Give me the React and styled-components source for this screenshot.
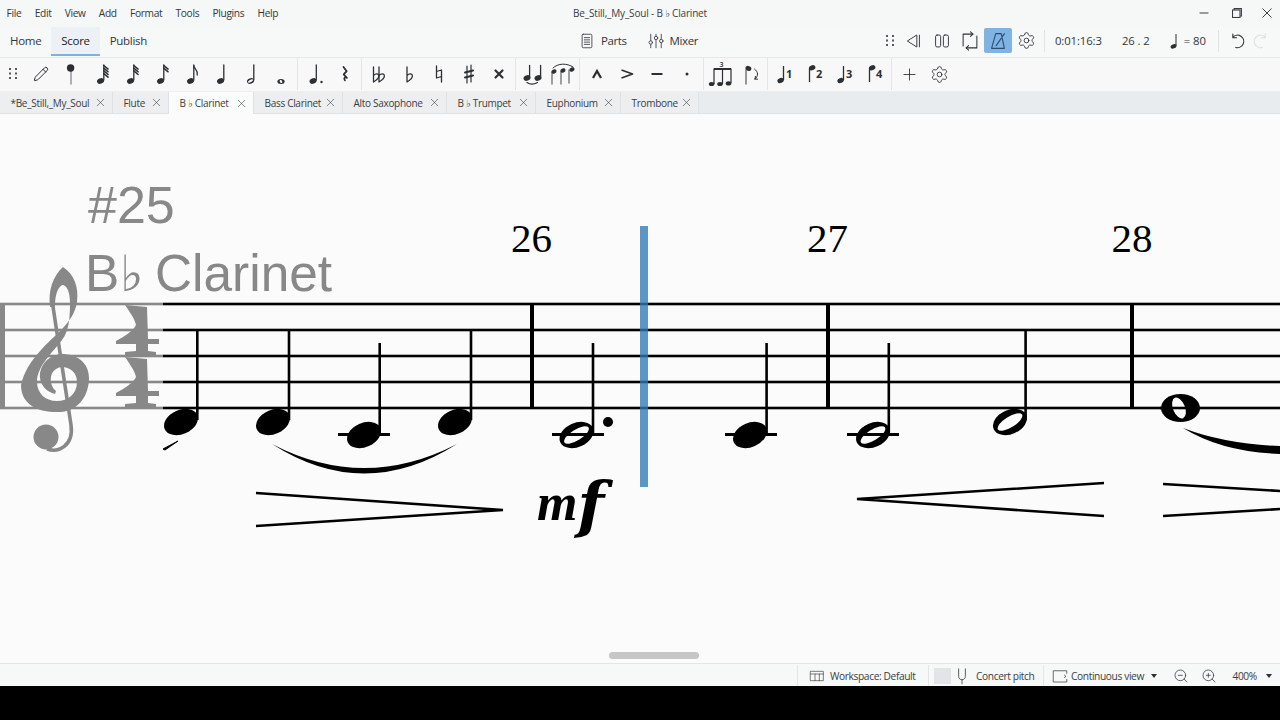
import React from "react";
import styled, { createGlobalStyle } from "styled-components";
import { Plus, Settings, ZoomIn, ZoomOut, X, Pencil } from "lucide-react";

const INK = "#2c3034";
const GREY = "#888888";
const PAPER = "#fbfbfb";
const UI = `"Open Sans", "Noto Sans", "DejaVu Sans", sans-serif`;

const Global = createGlobalStyle`
  html, body { margin: 0; padding: 0; background: #000; }
  * { box-sizing: border-box; }
`;

const Page = styled.div`
  width: 1280px; height: 720px; background: #000; overflow: hidden;
  font-family: ${UI}; color: ${INK};
`;
const Frame = styled.div`
  height: 686px; display: flex; flex-direction: column; background: #f7f8f8;
`;
const TitleBar = styled.div`
  height: 27px; padding-bottom: 1px; display: grid; grid-template-columns: 1fr auto 1fr; align-items: center; background: #f6f7f7;
`;
const Menu = styled.nav`display: flex;`;
const MenuItem = styled.span`
  padding: 0 6.6px; font-size: 10.2px; letter-spacing: -0.32px; color: #33373b;
`;
const Title = styled.div`font-size: 10px; letter-spacing: -0.18px; color: #3a3e42;`;
const WindowControls = styled.div`display: flex; justify-content: flex-end;`;
const WindowButton = styled.span`
  width: ${p => p.$w}px; height: 26px; display: flex; align-items: center; justify-content: center; color: #3a3e42;
`;
const ModeBar = styled.div`
  height: 31px; padding-bottom: 1px; display: grid; grid-template-columns: 1fr auto 1fr; align-items: stretch;
  background: #f7f8f8; border-bottom: 1px solid #e6e8e9;
`;
const ModeTabs = styled.div`display: flex;`;
const ModeTab = styled.div`
  padding: 0 10px; font-size: 11.5px; letter-spacing: -0.3px; display: flex; align-items: center;
  color: ${p => (p.$active ? "#1f2225" : "#33373b")};
  background: ${p => (p.$active ? "#ebf1f5" : "transparent")};
  border-bottom: 2px solid ${p => (p.$active ? "#7fb2d8" : "transparent")};
`;
const CenterTools = styled.div`display: flex; align-items: center; gap: 20px; padding: 0 4px 2px 0;`;
const CenterTool = styled.div`display: flex; align-items: center; gap: 5px; font-size: 11.5px; letter-spacing: -0.4px; color: #33373b;`;
const Transport = styled.div`display: flex; align-items: center; justify-content: flex-end; padding: 0 7px 2px 0;`;
const TransportButton = styled.span`
  width: ${p => p.$w || 28}px; height: 25px; border-radius: 2px; display: flex; align-items: center; justify-content: center;
  background: ${p => (p.$active ? "#7fb3e4" : "transparent")};
  opacity: ${p => (p.$faint ? 0.12 : 1)};
`;
const VRule = styled.span`width: 1px; height: 22px; background: #e0e2e4; margin: 0 ${p => p.$r}px 0 ${p => p.$l}px;`;
const Readout = styled.span`
  width: ${p => p.$w}px; flex: none; font-size: 11.3px; letter-spacing: -0.1px; color: #33373b; white-space: pre; display: flex; align-items: center;
`;
const Toolbar = styled.div`
  height: 33px; padding-bottom: 1px; display: flex; align-items: stretch; background: #f8f8f8;
`;
const Grip = styled.span`width: 25px; display: flex; align-items: center; justify-content: center;`;
const ToolGroup = styled.div`
  display: flex; padding: 0 1px 0 ${p => (p.$first ? 1 : 2)}px;
  border-right: ${p => (p.$last ? "none" : "1px solid #e3e5e7")};
`;
const ToolButton = styled.span`
  width: 30px; display: flex; align-items: center; justify-content: center; color: ${INK};
`;
const TabBar = styled.div`
  height: 23px; display: flex; background: #e9ecee; border-bottom: 1px solid #dfe2e4; border-top: 1px solid #eceeef;
`;
const Tab = styled.div`
  width: ${p => p.$w}px; display: flex; align-items: center; justify-content: space-between; padding: 0 5px 0 10.5px;
  font-size: 10px; letter-spacing: -0.3px; color: #3a3e42; white-space: pre;
  background: ${p => (p.$active ? "#fafbfb" : "#eceef0")};
  border-right: 1px solid #dfe2e4;
  margin-bottom: ${p => (p.$active ? "-1px" : "0")};
`;
const ScoreArea = styled.main`
  position: relative; flex: 1; background: ${PAPER}; overflow: hidden;
`;
const ScoreSheet = styled.svg`display: block;`;
const TitleText = styled.text`
  font-family: "Liberation Sans", sans-serif; fill: ${GREY}; font-size: ${p => p.$size}px;
`;
const FlatGlyph = styled.tspan`font-family: "DejaVu Sans", sans-serif; font-weight: 200; font-size: 50px;`;
const MeasureNo = styled.text`
  font-family: "Liberation Serif", serif; fill: #000; font-size: 41px; text-anchor: middle;
`;
const Dynamic = styled.text`
  font-weight: 700; font-style: italic; fill: #000;
`;
const DynamicM = styled.tspan`font-family: "Liberation Serif", serif; font-size: 52px;`;
const DynamicF = styled.tspan`font-family: "DejaVu Serif", serif; font-size: 62px;`;
const ScrollThumb = styled.div`
  position: absolute; left: 609px; top: 538px; width: 90px; height: 7px; border-radius: 4px; background: #c6c6c6;
`;
const StatusBar = styled.footer`
  height: 23px; padding-top: 1px; display: flex; justify-content: flex-end; align-items: stretch; background: #f7f8f8; border-top: 1px solid #e3e5e7;
`;
const StatusSection = styled.div`
  display: flex; align-items: center; width: ${p => p.$w}px; padding-left: ${p => p.$pl || 0}px; gap: ${p => p.$gap || 0}px;
  border-left: 1px solid #e3e5e7; white-space: nowrap;
  font-size: 10.2px; letter-spacing: -0.38px; color: #3a3e42;
`;
const PitchSwatch = styled.span`width: 17px; height: 16px; background: #e3e4e7;`;
const Caret = styled.span`
  flex: none; width: 0; height: 0; border-left: 3px solid transparent; border-right: 3px solid transparent; border-top: 4px solid #2c3034;
`;
const Spacer = styled.span`width: ${p => p.$w}px; flex: none;`;

/* ---- icons ---- */
const Ico = ({ s = 24, w = 1.3, children, c = "currentColor" }) => (
  <svg width={s} height={s} viewBox="0 0 24 24" fill="none" stroke={c} strokeWidth={w} strokeLinecap="round" strokeLinejoin="round">{children}</svg>
);
const Head = ({ x = 12, y = 19, open, dark = INK }) => (
  <g>
    <ellipse cx={x} cy={y} rx="3.6" ry="2.7" transform={`rotate(-22 ${x} ${y})`} fill={dark} stroke="none" />
    {open && <ellipse cx={x} cy={y} rx="2.8" ry="1.2" transform={`rotate(-30 ${x} ${y})`} fill="#f8f8f8" stroke="none" />}
  </g>
);
const Note = ({ flags = 0, open }) => (
  <Ico>
    <Head x={11.5} open={open} />
    <path d="M14.8 18V3" />
    {Array.from({ length: flags }).map((_, i) => (
      flags === 1
        ? <path key={i} d="M14.8 4c.6 3 4.6 4.4 3.4 9" />
        : <path key={i} d={`M14.8 ${3.5 + i * 2.7}l4.3 3.6`} strokeWidth="1.5" />
    ))}
  </Ico>
);
const Dots = () => (
  <svg width="10" height="14" viewBox="0 0 10 14" fill="#555a5f">
    {[1, 5.5, 10].map(y => [0, 6].map(x => <rect key={`${x}${y}`} x={x + 1} y={y} width="2" height="2" />))}
  </svg>
);
const Pin = () => (
  <Ico><path d="M12 9v13" stroke="#9a9da0" strokeWidth="1.6" /><circle cx="11.6" cy="6" r="3.7" fill={INK} stroke="none" /></Ico>
);
const Whole = () => (
  <Ico><ellipse cx="12" cy="19.5" rx="3.6" ry="2.5" fill={INK} stroke="none" /><ellipse cx="12" cy="19.5" rx="1.2" ry="1.6" fill="#f8f8f8" stroke="none" transform="rotate(-30 12 19.5)" /></Ico>
);
const Dotted = () => (
  <Ico><Head x={10} /><path d="M13.3 18V3" /><circle cx="18.5" cy="20" r="1.2" fill={INK} stroke="none" /></Ico>
);
const Rest = () => (
  <Ico w={1.8}><path d="M10.5 5l3.2 4.2-3 3.2 3.2 3.4c-2-.8-3.6 0-2 2.6" /></Ico>
);
const FlatShape = ({ x = 0 }) => (
  <path d={`M${10 + x} 5v15c3-1.8 5.4-3.6 5.4-6 0-2.4-3-2.8-5.4-.6`} />
);
const Flat = () => <Ico><FlatShape /></Ico>;
const DoubleFlat = () => <Ico><FlatShape x={-3.5} /><FlatShape x={2} /></Ico>;
const Natural = () => <Ico><path d="M9.5 4v12l5-1.5M14.5 20V8l-5 1.5" /></Ico>;
const Sharp = () => <Ico w={1.2}><path d="M10 4v17M14 3v17" /><path d="M8 10.5l8-2M8 15.5l8-2" strokeWidth="2" /></Ico>;
const DoubleSharp = () => <Ico w={2.2}><path d="M8.5 8.5l7 7M15.5 8.5l-7 7" /></Ico>;
const Tie = () => (
  <Ico>
    <Head x={6} y={16} /><path d="M8.6 15V3.5" />
    <Head x={17} y={16} /><path d="M19.6 15V3.5" />
    <path d="M6 20.5c3 2 7 2 10.5 0" />
  </Ico>
);
const Slur = () => (
  <svg width="30" height="24" viewBox="0 0 30 24" fill="none" stroke="#6a6d70" strokeWidth="1.3" strokeLinecap="round">
    <path d="M4 22V10M13 22V9M21 21V8" />
    <ellipse cx="6" cy="9.5" rx="2.6" ry="2" fill={INK} stroke="none" transform="rotate(-20 6 9.5)" />
    <ellipse cx="15" cy="8.5" rx="2.6" ry="2" fill={INK} stroke="none" transform="rotate(-20 15 8.5)" />
    <ellipse cx="24" cy="7.5" rx="2.6" ry="2" fill={INK} stroke="none" transform="rotate(-20 24 7.5)" />
    <path d="M5 6c5-5 14-5 20-1" stroke={INK} strokeWidth="1" />
  </svg>
);
const Marcato = () => <Ico w={2.3}><path d="M8 16l4-7 4 7" strokeLinecap="butt" strokeLinejoin="miter" /></Ico>;
const Accent = () => <Ico w={1.8}><path d="M6.5 8l11 4-11 4" strokeLinecap="butt" /></Ico>;
const Tenuto = () => <Ico w={2}><path d="M6.5 12h11" strokeLinecap="butt" /></Ico>;
const Staccato = () => <Ico><circle cx="12" cy="12" r="1.5" fill={INK} stroke="none" /></Ico>;
const TupletDigit = styled.text`font-family: "Open Sans", sans-serif; font-size: 7px; font-weight: 600; fill: ${INK}; stroke: none;`;
const Tuplet = () => (
  <svg width="28" height="28" viewBox="-1 0 28 28" fill="none" stroke={INK} strokeWidth="1.2">
    <TupletDigit x="11.6" y="6.5">3</TupletDigit>
    <path d="M6 24V9h17v14M14.5 24V9" />
    <path d="M6 9h17" strokeWidth="2" />
    <ellipse cx="3.6" cy="24" rx="2.8" ry="2.1" fill={INK} stroke="none" />
    <ellipse cx="12" cy="24" rx="2.8" ry="2.1" fill={INK} stroke="none" />
    <ellipse cx="20.5" cy="23.4" rx="2.8" ry="2.1" fill={INK} stroke="none" />
  </svg>
);
const Flip = () => (
  <Ico>
    <path d="M7 8v14" stroke="#5d6064" />
    <ellipse cx="9.4" cy="6.4" rx="3" ry="2.4" fill={INK} stroke="none" transform="rotate(20 9.4 6.4)" />
    <path d="M15.5 7c4 3 4 7 .5 10M16 17l2.6.2M16 17l.4-2.6" strokeWidth="1" />
  </Ico>
);
const VoiceDigit = styled.text`font-family: "Open Sans", sans-serif; font-size: 11px; font-weight: 700; fill: ${INK}; stroke: none;`;
const Voice = ({ n }) => {
  const up = n % 2 === 1;
  return (
    <svg width="24" height="24" viewBox="0 0 24 24" fill="none" stroke={INK} strokeWidth="1.3">
      {up ? (
        <>
          <path d="M10.5 4v14" />
          <ellipse cx="7.6" cy="18.5" rx="3.3" ry="2.5" fill={INK} stroke="none" transform="rotate(-22 7.6 18.5)" />
        </>
      ) : (
        <>
          <path d="M6.5 6v14" />
          <ellipse cx="9.2" cy="5.8" rx="3.3" ry="2.5" fill={INK} stroke="none" transform="rotate(-22 9.2 5.8)" />
        </>
      )}
      <VoiceDigit x="13" y="15.5">{n}</VoiceDigit>
    </svg>
  );
};
const Parts = () => (
  <Ico s={18} w={1.1}><rect x="5.5" y="3" width="13" height="18" rx="1.5" /><path d="M8.5 7.5h7M8.5 10.5h7M8.5 13.5h7M8.5 16.5h7" /></Ico>
);
const Mixer = () => (
  <Ico s={18} w={1.1}>
    <path d="M5 3v18M12 3v18M19 3v18" />
    <circle cx="5" cy="14" r="2.3" fill="#f7f8f8" /><circle cx="12" cy="8" r="2.3" fill="#f7f8f8" /><circle cx="19" cy="12" r="2.3" fill="#f7f8f8" />
  </Ico>
);
const Prev = () => <Ico s={20} w={1.1}><path d="M15 5L4 12l11 7zM18.5 5v14" /></Ico>;
const Pause = () => <Ico s={22} w={1}><rect x="5" y="5.5" width="5.5" height="13" rx="1.6" /><rect x="13.5" y="5.5" width="5.5" height="13" rx="1.6" /></Ico>;
const Loop = () => (
  <Ico s={22} w={1.1}>
    <path d="M15 4.5H4.5v13M8 19.5h11.5V6.5" />
    <path d="M12.5 2l2.8 2.5-2.8 2.5M10.5 17l-2.8 2.5 2.8 2.5" />
  </Ico>
);
const Metronome = () => <Ico s={22} w={1.2} c="#2d4e72"><path d="M9.5 4h6l3.5 16H5zM10 17l9-13" /></Ico>;
const Undo = () => <Ico s={20} w={1.3}><path d="M7 7.5a7.5 7.5 0 1 1 3.5 12.2M7 3.5v4.5h4.5" /></Ico>;
const Redo = () => <Ico s={20} w={1.3}><path d="M17 7.5a7.5 7.5 0 1 0-3.5 12.2M17 3.5v4.5h-4.5" /></Ico>;
const TempoGlyph = styled.svg`flex: none; margin-right: 2px;`;
const TempoNote = () => (
  <TempoGlyph width="10" height="16" viewBox="0 0 10 16" stroke={INK} fill={INK} strokeWidth="1"><path d="M7 1v12" /><ellipse cx="4.5" cy="13.4" rx="3" ry="2.1" stroke="none" transform="rotate(-20 4.5 13.4)" /></TempoGlyph>
);
const WorkspaceIcon = () => <Ico s={16} w={1}><rect x="2.5" y="5" width="19" height="14" /><path d="M2.5 9h19M9 9v10M15.5 9v10" /></Ico>;
const Fork = () => <Ico s={18} w={1.1}><path d="M7.5 2.5v10c0 6 9 6 9 0v-10M12 17v5.5" /></Ico>;
const ViewIcon = () => <Ico s={18} w={1}><path d="M21 8.5V5H3v15h18v-3.5M18 11l2 1.5-2 1.5" /></Ico>;
const Minimize = () => <svg width="10" height="10" viewBox="0 0 10 10" stroke="#3a3e42"><path d="M0.5 5h9" /></svg>;
const Restore = () => <svg width="10" height="10" viewBox="0 0 10 10" fill="none" stroke="#3a3e42" strokeWidth="1.1"><rect x="0.5" y="2" width="7.5" height="7.5" /><path d="M2.2 2V.6h7.2v7.4H8" /></svg>;
const CloseX = () => <svg width="10" height="10" viewBox="0 0 10 10" stroke="#3a3e42" strokeWidth="1"><path d="M.5.5l9 9M9.5.5l-9 9" /></svg>;

/* ---- engraved score ---- */
const STAFF = [304, 330, 356, 382, 408];
const Filled = ({ x, y }) => <ellipse cx={x} cy={y} rx="17.8" ry="12" transform={`rotate(-24 ${x} ${y})`} fill="#000" />;
const Hollow = ({ x, y }) => (
  <g>
    <Filled x={x} y={y} />
    <ellipse cx={x} cy={y} rx="14.2" ry="5.4" transform={`rotate(-32 ${x} ${y})`} fill={PAPER} />
  </g>
);
const Stem = ({ x, top, bottom }) => <rect x={x - 1.3} y={top} width="2.6" height={bottom - top} fill="#000" />;
const Ledger = ({ x }) => <rect x={x - 26} y="433" width="52" height="3" fill="#000" />;
const Barline = ({ x }) => <rect x={x - 2} y="304" width="4" height="104" fill="#000" />;
const Hairpin = ({ d }) => <path d={d} fill="none" stroke="#000" strokeWidth="2.6" />;

const CLEF = "M63 267C74 274 79 287 77 302C74 323 53 336 41 350C30 362 24 372 21 385C21 407 42 413 60 412C79 411 89 395 89 378C89 362 76 354 62 354C47 355 39 367 40 378C41 386 47 392 55 394L56 391C52 388 50 382 51 377C52 370 58 367 63 367C71 368 77 373 77 382C77 394 68 401 57 401C45 401 37 393 37 382C37 366 53 352 62 340C69 331 70 318 70 303C70 292 67 285 62 285C57 288 55 297 55 306L50 307C48 290 53 276 63 267Z";
const FOUR = "M125 305L147 307L148 339L159 339L159 344L148 344L148 351L156 352L156 357L125 357L125 352L136 351L136 344L116 344L116 341C124 337 134 330 136 325C135 319 129 311 125 305Z";

const ScoreDrawing = () => (
  <ScoreSheet width="1280" height="549" viewBox="0 114 1280 549">
    {STAFF.map(y => (
      <g key={y}>
        <rect x="0" y={y - 1.3} width="163" height="2.6" fill={GREY} />
        <rect x="163" y={y - 1.3} width="1117" height="2.6" fill="#000" />
      </g>
    ))}
    <rect x="0" y="303" width="5" height="106" fill={GREY} />

    <TitleText x="88" y="223" $size="52">#25</TitleText>
    <TitleText y="291" $size="51.4">
      <tspan x="85">B</tspan>
      <FlatGlyph x="119.5">♭</FlatGlyph>
      <tspan x="155">Clarinet</tspan>
    </TitleText>

    <path d={CLEF} fill={GREY} />
    <path d="M52 300L71 425C74 446 58 453 47 449" fill="none" stroke={GREY} strokeWidth="3.6" />
    <circle cx="46" cy="437" r="12.5" fill={GREY} />
    <path d={FOUR} fill={GREY} />
    <path d={FOUR} fill={GREY} transform="translate(0 52)" />

    <MeasureNo x="531.5" y="252">26</MeasureNo>
    <MeasureNo x="827.5" y="252">27</MeasureNo>
    <MeasureNo x="1132" y="252">28</MeasureNo>

    <Barline x={532} /><Barline x={828} /><Barline x={1132} />

    <Filled x={181} y={422} /><Stem x={197.3} top={330} bottom={420} />
    <Filled x={273} y={422} /><Stem x={289} top={330} bottom={420} />
    <Filled x={364} y={435} /><Ledger x={364} /><Stem x={379.7} top={343} bottom={433} />
    <Filled x={455} y={422} /><Stem x={471} top={330} bottom={420} />
    <path d="M163 449L178 441L165 450Z" fill="#000" stroke="#000" strokeWidth="1" />
    <path d="M272 444Q364 492 457 444Q364 503 272 444Z" fill="#000" />

    <Hollow x={576.5} y={435} /><Ledger x={578} /><Stem x={593} top={343} bottom={433} />
    <circle cx="608" cy="422" r="5" fill="#000" />

    <Filled x={750} y={435} /><Ledger x={751} /><Stem x={766.6} top={343} bottom={433} />
    <Hollow x={873} y={435} /><Ledger x={873} /><Stem x={888.8} top={343} bottom={433} />
    <Hollow x={1010} y={422} /><Stem x={1025.6} top={330} bottom={420} />

    <ellipse cx="1180.5" cy="408" rx="19.5" ry="14" fill="#000" />
    <ellipse cx="1179" cy="408" rx="6" ry="11" transform="rotate(-22 1179 408)" fill={PAPER} />
    <rect x="1160" y="406.7" width="40" height="2.6" fill="#000" />
    <path d="M1183 428Q1225 444 1280 446L1280 454Q1222 452 1183 428Z" fill="#000" />

    <Hairpin d="M256 493L503 510L256 526" />
    <Hairpin d="M1104 483L857 499L1104 516" />
    <Hairpin d="M1163 484L1280 491M1163 516L1280 509" />

    <Dynamic x="537" y="520">
      <DynamicM>m</DynamicM>
      <DynamicF dy="6">f</DynamicF>
    </Dynamic>

    <rect x="640" y="226" width="8" height="261" fill="#2d7aba" fillOpacity="0.78" />
  </ScoreSheet>
);

const TABS = [
  ["*Be_Still,_My_Soul", 113], ["Flute", 56], ["B ♭ Clarinet", 85, true], ["Bass Clarinet", 89],
  ["Alto Saxophone", 104], ["B ♭ Trumpet", 89], ["Euphonium", 85], ["Trombone", 78],
];

export default function App() {
  return (
    <Page>
      <Global />
      <Frame>
        <TitleBar>
          <Menu>
            {["File", "Edit", "View", "Add", "Format", "Tools", "Plugins", "Help"].map(m => <MenuItem key={m}>{m}</MenuItem>)}
          </Menu>
          <Title>Be_Still,_My_Soul - B ♭ Clarinet</Title>
          <WindowControls>
            <WindowButton $w={31}><Minimize /></WindowButton>
            <WindowButton $w={35}><Restore /></WindowButton>
            <WindowButton $w={26}><CloseX /></WindowButton>
          </WindowControls>
        </TitleBar>
        <ModeBar>
          <ModeTabs>
            <ModeTab>Home</ModeTab>
            <ModeTab $active>Score</ModeTab>
            <ModeTab>Publish</ModeTab>
          </ModeTabs>
          <CenterTools>
            <CenterTool><Parts />Parts</CenterTool>
            <CenterTool><Mixer />Mixer</CenterTool>
          </CenterTools>
          <Transport>
            <TransportButton $w={20}><Dots /></TransportButton>
            <TransportButton><Prev /></TransportButton>
            <TransportButton><Pause /></TransportButton>
            <TransportButton><Loop /></TransportButton>
            <TransportButton $active><Metronome /></TransportButton>
            <TransportButton><Settings size={19} strokeWidth={1.1} /></TransportButton>
            <VRule $l={4} $r={10} />
            <Readout $w={67}>0:01:16:3</Readout>
            <Readout $w={47}>26 . 2</Readout>
            <Readout $w={45}><TempoNote />&nbsp;= 80</Readout>
            <VRule $l={4} $r={6} />
            <TransportButton $w={24}><Undo /></TransportButton>
            <TransportButton $w={24} $faint><Redo /></TransportButton>
          </Transport>
        </ModeBar>
        <Toolbar>
          <Grip><Dots /></Grip>
          <ToolGroup $first>
            <ToolButton><Pencil size={16} strokeWidth={1.5} /></ToolButton>
            <ToolButton><Pin /></ToolButton>
            <ToolButton><Note flags={4} /></ToolButton>
            <ToolButton><Note flags={3} /></ToolButton>
            <ToolButton><Note flags={2} /></ToolButton>
            <ToolButton><Note flags={1} /></ToolButton>
            <ToolButton><Note /></ToolButton>
            <ToolButton><Note open /></ToolButton>
            <ToolButton><Whole /></ToolButton>
          </ToolGroup>
          <ToolGroup>
            <ToolButton><Dotted /></ToolButton>
            <ToolButton><Rest /></ToolButton>
          </ToolGroup>
          <ToolGroup>
            <ToolButton><DoubleFlat /></ToolButton>
            <ToolButton><Flat /></ToolButton>
            <ToolButton><Natural /></ToolButton>
            <ToolButton><Sharp /></ToolButton>
            <ToolButton><DoubleSharp /></ToolButton>
          </ToolGroup>
          <ToolGroup>
            <ToolButton><Tie /></ToolButton>
            <ToolButton><Slur /></ToolButton>
          </ToolGroup>
          <ToolGroup>
            <ToolButton><Marcato /></ToolButton>
            <ToolButton><Accent /></ToolButton>
            <ToolButton><Tenuto /></ToolButton>
            <ToolButton><Staccato /></ToolButton>
          </ToolGroup>
          <ToolGroup>
            <ToolButton><Tuplet /></ToolButton>
            <ToolButton><Flip /></ToolButton>
          </ToolGroup>
          <ToolGroup>
            {[1, 2, 3, 4].map(n => <ToolButton key={n}><Voice n={n} /></ToolButton>)}
          </ToolGroup>
          <ToolGroup $last>
            <ToolButton><Plus size={19} strokeWidth={1.1} /></ToolButton>
            <ToolButton><Settings size={19} strokeWidth={1.1} /></ToolButton>
          </ToolGroup>
        </Toolbar>
        <TabBar>
          {TABS.map(([label, w, active]) => (
            <Tab key={label} $w={w} $active={active}>
              {label}
              <X size={13} strokeWidth={1.1} />
            </Tab>
          ))}
        </TabBar>
        <ScoreArea>
          <ScoreDrawing />
          <ScrollThumb />
        </ScoreArea>
        <StatusBar>
          <StatusSection $w={131} $pl={11} $gap={5}><WorkspaceIcon />Workspace: Default</StatusSection>
          <StatusSection $w={115} $pl={5} $gap={2}>
            <PitchSwatch /><Fork /><Spacer $w={1} />Concert pitch
          </StatusSection>
          <StatusSection $w={237} $pl={7} $gap={2}>
            <ViewIcon />Continuous view
            <Spacer $w={3} /><Caret /><Spacer $w={12.5} />
            <ZoomOut size={16} strokeWidth={1.2} /><Spacer $w={8} />
            <ZoomIn size={16} strokeWidth={1.2} /><Spacer $w={11} />400%
            <Spacer $w={5} /><Caret />
          </StatusSection>
        </StatusBar>
      </Frame>
    </Page>
  );
}
